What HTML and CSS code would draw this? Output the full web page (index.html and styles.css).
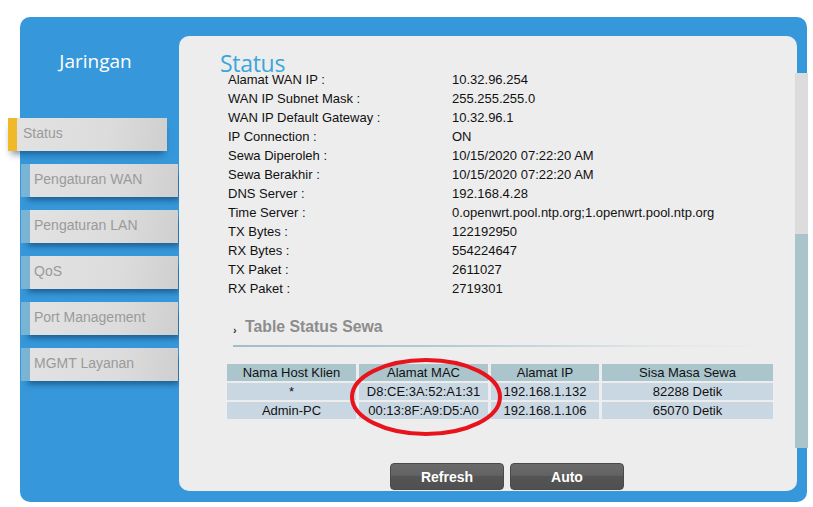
FILE: index.html
```html
<!DOCTYPE html>
<html>
<head>
<meta charset="utf-8">
<link rel="stylesheet" href="styles.css">
</head>
<body>
<div class="frame">
  <aside class="sidebar">
    <h2 class="side-title">Jaringan</h2>
    <nav class="menu">
      <div class="item active">Status</div>
      <div class="item">Pengaturan WAN</div>
      <div class="item">Pengaturan LAN</div>
      <div class="item">QoS</div>
      <div class="item">Port Management</div>
      <div class="item">MGMT Layanan</div>
    </nav>
  </aside>
  <main class="panel">
    <h1 class="title">Status</h1>
    <div class="info">
      <div>Alamat WAN IP :</div><div>10.32.96.254</div>
      <div>WAN IP Subnet Mask :</div><div>255.255.255.0</div>
      <div>WAN IP Default Gateway :</div><div>10.32.96.1</div>
      <div>IP Connection :</div><div>ON</div>
      <div>Sewa Diperoleh :</div><div>10/15/2020 07:22:20 AM</div>
      <div>Sewa Berakhir :</div><div>10/15/2020 07:22:20 AM</div>
      <div>DNS Server :</div><div>192.168.4.28</div>
      <div>Time Server :</div><div>0.openwrt.pool.ntp.org;1.openwrt.pool.ntp.org</div>
      <div>TX Bytes :</div><div>122192950</div>
      <div>RX Bytes :</div><div>554224647</div>
      <div>TX Paket :</div><div>2611027</div>
      <div>RX Paket :</div><div>2719301</div>
    </div>
    <div class="section">
      <span class="bullet">&#8250;</span><span class="section-title">Table Status Sewa</span>
    </div>
    <div class="rule"></div>
    <table class="lease">
      <thead>
        <tr><th class="c1">Nama Host Klien</th><th class="c2">Alamat MAC</th><th class="c3">Alamat IP</th><th class="c4">Sisa Masa Sewa</th></tr>
      </thead>
      <tbody>
        <tr><td>*</td><td>D8:CE:3A:52:A1:31</td><td>192.168.1.132</td><td>82288 Detik</td></tr>
        <tr><td>Admin-PC</td><td>00:13:8F:A9:D5:A0</td><td>192.168.1.106</td><td>65070 Detik</td></tr>
      </tbody>
    </table>
    <div class="buttons">
      <button class="btn">Refresh</button>
      <button class="btn">Auto</button>
    </div>
    <svg class="circle" width="160" height="84" viewBox="0 0 160 84">
      <ellipse cx="80" cy="42" rx="74" ry="37" fill="none" stroke="#e8141d" stroke-width="4"/>
    </svg>
  </main>
  <div class="scrollbar"><div class="thumb"></div></div>
</div>
</body>
</html>
```
FILE: styles.css
```css
html, body {
  margin: 0;
  padding: 0;
  background: #ffffff;
}
body {
  font-family: "Liberation Sans", Arial, sans-serif;
  width: 813px;
  height: 507px;
  overflow: hidden;
}
.frame {
  position: relative;
  margin: 17px 0 0 20px;
  width: 787px;
  height: 485px;
  background: #3698da;
  border-radius: 10px;
  display: flex;
}
.sidebar {
  width: 159px;
  flex: none;
}
.side-title {
  margin: 33px 0 0 0;
  padding-right: 8px;
  text-align: center;
  font-family: "Open Sans", sans-serif;
  font-weight: normal;
  font-size: 19px;
  line-height: 22px;
  color: #ffffff;
}
.menu {
  margin-top: 46px;
  display: flex;
  flex-direction: column;
  gap: 13px;
}
.item {
  margin-left: 1px;
  height: 33px;
  padding-left: 4px;
  border-left: 9px solid #7ab4d4;
  box-sizing: border-box;
  width: 157px;
  background: linear-gradient(100deg, #e2e2e2 0%, #dcdcdc 60%, #cfcfcf 100%);
  color: #9a9a9a;
  font-family: "Liberation Sans", Arial, sans-serif;
  font-size: 14px;
  line-height: 31px;
  box-shadow: 4px 6px 6px -3px rgba(10, 50, 90, 0.6);
}
.item.active {
  margin-left: -12px;
  width: 159px;
  padding-left: 6px;
  border-left-color: #f0b92a;
  box-shadow: 0 6px 7px -3px rgba(10, 50, 90, 0.55);
}
.panel {
  position: relative;
  margin-top: 19px;
  width: 618px;
  height: 455px;
  background: #ededed;
  border-radius: 10px;
  box-sizing: border-box;
  padding: 15px 0 0 41px;
}
.title {
  margin: 0;
  font-family: "Open Sans", sans-serif;
  font-weight: normal;
  font-size: 23px;
  line-height: 24px;
  color: #3aa6dc;
  letter-spacing: -0.3px;
}
.info {
  margin: -5px 0 0 8px;
  display: grid;
  grid-template-columns: 224px auto;
  grid-auto-rows: 19px;
  font-size: 13px;
  line-height: 19px;
  color: #111;
}
.section {
  margin: 19px 0 0 13px;
  display: flex;
  align-items: center;
  height: 20px;
}
.bullet {
  font-size: 11px;
  color: #333;
  width: 12px;
  margin-top: 5px;
  font-weight: bold;
}
.section-title {
  font-size: 15.8px;
  font-weight: bold;
  color: #8c8c8c;
}
.rule {
  margin: 8px 0 0 13px;
  width: 540px;
  height: 2px;
  background: linear-gradient(90deg, #a0bec9 0%, #b5cad2 40%, #e2e8ea 80%, #ededed 100%);
}
.lease {
  margin: 15px 0 0 4px;
  border-collapse: separate;
  border-spacing: 3px 2px;
  font-size: 13px;
  color: #111;
}
.lease th, .lease td {
  padding: 0;
  height: 17px;
  line-height: 17px;
  text-align: center;
  font-weight: normal;
}
.lease th {
  background: #abc5cd;
}
.lease td {
  background: #c9d7e3;
}
.c1 { width: 129px; }
.c2 { width: 129px; }
.c3 { width: 108px; }
.c4 { width: 171px; }
.buttons {
  margin: 42px 0 0 170px;
  display: flex;
  gap: 6px;
}
.btn {
  width: 114px;
  height: 27px;
  border: 1px solid #4a4a4a;
  border-radius: 4px;
  background: linear-gradient(180deg, #6a6a6a 0%, #636363 45%, #545454 50%, #505050 100%);
  color: #ffffff;
  font-family: "Liberation Sans", Arial, sans-serif;
  font-weight: bold;
  font-size: 14px;
  padding: 0;
}
.circle {
  position: absolute;
  left: 167px;
  top: 319px;
}
.scrollbar {
  position: absolute;
  left: 775px;
  top: 56px;
  width: 13px;
  height: 375px;
  background: #dcdcdc;
}
.thumb {
  margin-top: 161px;
  height: 214px;
  background: #aac4cc;
}
```
